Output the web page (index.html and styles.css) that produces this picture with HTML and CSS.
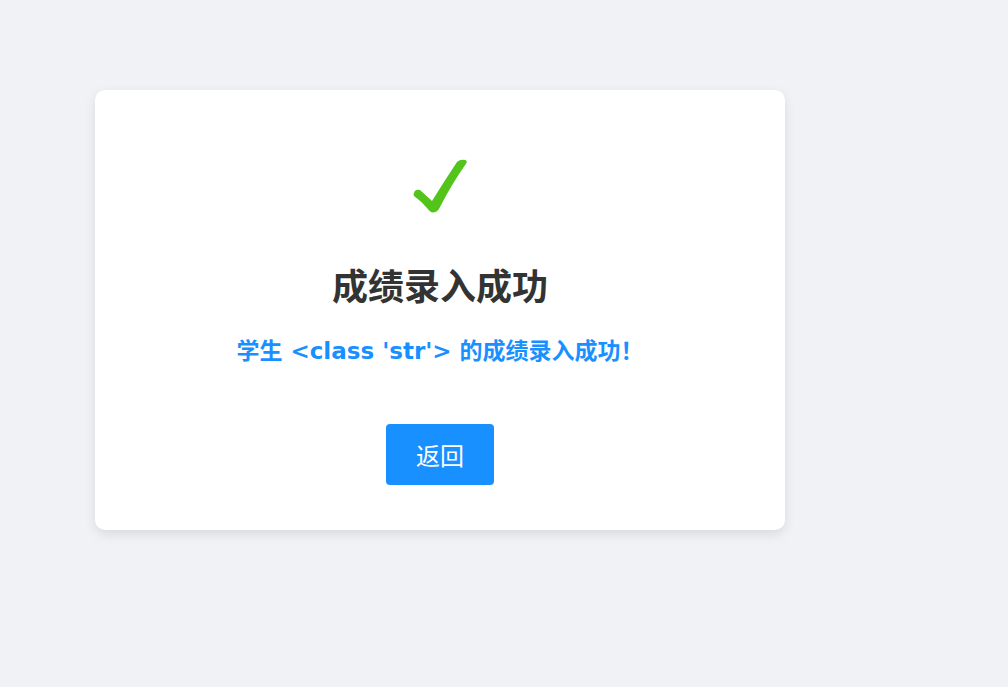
FILE: index.html
```html
<!DOCTYPE html>
<html lang="zh-CN">
<head>
<meta charset="utf-8">
<title>成绩录入成功</title>
<link rel="stylesheet" href="styles.css">
</head>
<body>
<div class="page">
  <div class="card">
    <svg class="check" width="70" height="70" viewBox="0 0 70 70" aria-hidden="true">
      <path d="M9,43 Q10,39 15,40 L27,51 Q40,30 52,12 Q55,9 60.5,10 Q62.5,11 61.5,13 Q46,35 34,59 Q31,63 27,62.5 Q24,61 22,58 Q16,51 9,46 Q8,44.5 9,43 Z" fill="#52c41a"/>
    </svg>
    <h1 class="title">成绩录入成功</h1>
    <p class="message">学生 &lt;class 'str'&gt; 的成绩录入成功！</p>
    <button class="btn" type="button">返回</button>
  </div>
</div>
</body>
</html>
```

FILE: styles.css
```css
html, body {
  margin: 0;
  padding: 0;
  background: #f0f2f5;
  font-family: "Liberation Sans", "Noto Sans CJK SC", sans-serif;
}

.page {
  padding: 90px 0 0 95px;
  min-height: 687px;
  box-sizing: border-box;
}

.card {
  width: 690px;
  box-sizing: border-box;
  background: #ffffff;
  border-radius: 10px;
  box-shadow: 0 4px 12px rgba(0, 0, 0, 0.1);
  padding: 60px 0 45px;
  display: flex;
  flex-direction: column;
  align-items: center;
}

.check {
  display: block;
}

.title {
  margin: 45px 0 0;
  font-size: 36px;
  line-height: 46px;
  font-weight: 700;
  color: #333333;
}

.message {
  margin: 25px 0 0;
  font-family: "DejaVu Sans", "Noto Sans CJK SC", sans-serif;
  font-size: 23px;
  line-height: 30px;
  font-weight: 700;
  color: #1890ff;
}

.btn {
  margin-top: 58px;
  height: 61px;
  padding: 0 30px;
  border: none;
  border-radius: 4px;
  background: #1890ff;
  color: #ffffff;
  font-family: "Liberation Sans", "Noto Sans CJK SC", sans-serif;
  font-size: 24px;
  cursor: pointer;
}
```
